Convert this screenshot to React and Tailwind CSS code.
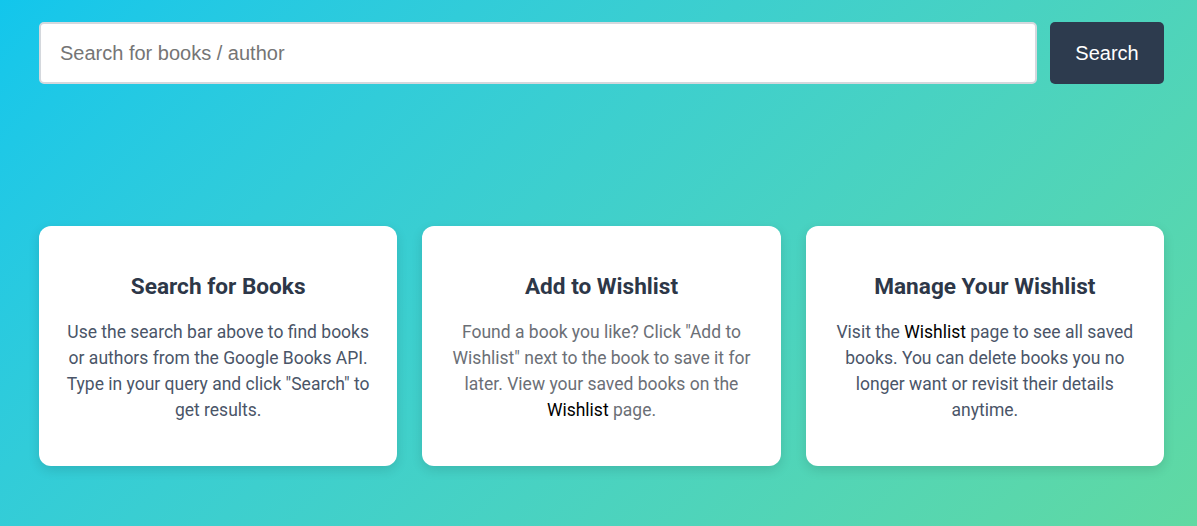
import React from 'react';

const cards = [
    {
        title: 'Search for Books',
        body: <>Use the search bar above to find books or authors from the Google Books API. Type in your query and click "Search" to get results.</>,
        tone: 'text-[#4a5568]',
    },
    {
        title: 'Add to Wishlist',
        body: <>Found a book you like? Click "Add to Wishlist" next to the book to save it for later. View your saved books on the <span className="text-black">Wishlist</span> page.</>,
        tone: 'text-[#6b6f76]',
    },
    {
        title: 'Manage Your Wishlist',
        body: <>Visit the <span className="text-black">Wishlist</span> page to see all saved books. You can delete books you no longer want or revisit their details anytime.</>,
        tone: 'text-[#4a5568]',
    },
];

const App = () => {
    return (
        <div className="min-h-[526px] w-full bg-linear-135 from-[#12c6ec] to-[#60d9a2] pl-[39px] pr-[33px] pt-[22px] pb-[60px]">
            {/* Search bar */}
            <div className="flex gap-[13px]">
                <input
                    type="text"
                    placeholder="Search for books / author"
                    className="h-[62px] flex-1 rounded-[5px] border-2 border-[#d4d8dd] bg-white px-[19px] font-['Liberation_Sans',Arial,sans-serif] text-[20px] text-gray-800 placeholder:text-[#757575] outline-none"
                />
                <button className="h-[62px] w-[114px] rounded-[5px] bg-[#2d3b4e] font-['Liberation_Sans',Arial,sans-serif] text-[20px] text-white">
                    Search
                </button>
            </div>

            {/* Info cards */}
            <div className="mt-[142px] grid grid-cols-3 gap-[25px] font-['Roboto',sans-serif]">
                {cards.map(card => (
                    <div
                        key={card.title}
                        className="flex h-[240px] flex-col items-center rounded-[12px] bg-white px-[24px] pt-[44px] text-center shadow-[0_4px_12px_rgba(0,0,0,0.12)]"
                    >
                        <h3 className="text-[22.6px] font-bold text-[#2d3748]">{card.title}</h3>
                        <p className={`mt-[15px] text-[17.5px] leading-[26px] ${card.tone}`}>{card.body}</p>
                    </div>
                ))}
            </div>
        </div>
    );
};

export default App;
